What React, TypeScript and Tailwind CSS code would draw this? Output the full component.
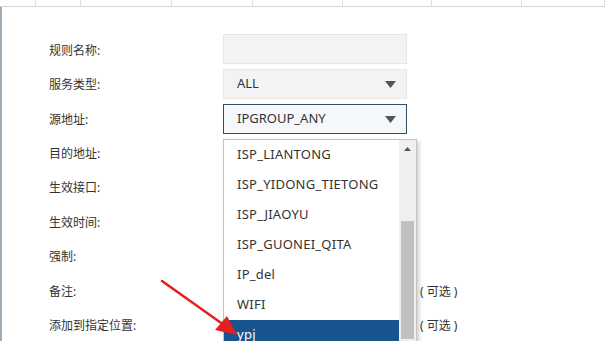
import React from "react";

const labels = ["规则名称:", "服务类型:", "源地址:", "目的地址:", "生效接口:", "生效时间:", "强制:", "备注:", "添加到指定位置:"];
const options = ["ISP_LIANTONG", "ISP_YIDONG_TIETONG", "ISP_JIAOYU", "ISP_GUONEI_QITA", "IP_del", "WIFI", "ypj"];
const cols = [36, 45, 91, 81, 90, 89, 90, 83];

const Tri = () => (
  <svg width="11" height="7" viewBox="0 0 11 7">
    <polygon points="0,0 11,0 5.5,7" fill="#555" />
  </svg>
);

export default function App() {
  return (
    <div
      className="relative w-[605px] h-[341px] overflow-hidden bg-white text-[#333]"
      style={{ fontFamily: '"Noto Sans", "Noto Sans CJK SC", sans-serif' }}
    >
      <div className="flex h-[7px] border-b border-[#d4d4d4]">
        {cols.map((w, i) => (
          <div key={i} className="h-full shrink-0 border-r border-[#e2e2e2]" style={{ width: w }} />
        ))}
      </div>
      <div className="flex h-[334px]">
        <div className="w-[2px] bg-[#9eadb8]" />
        <div className="flex">
          <div className="flex flex-col gap-[5px] pt-[29px] pl-[47px] w-[221px]">
            {labels.map((l) => (
              <div key={l} className="h-[30px] flex items-center text-[12px] text-[#333]">
                {l}
              </div>
            ))}
          </div>
          <div className="flex flex-col gap-[5px] pt-[27px] w-[184px]">
            <div className="h-[30px] bg-[#f3f3f3] border border-[#e6e6e6]" />
            <div className="h-[30px] bg-[#f3f3f3] border border-[#e6e6e6] flex items-center justify-between pl-[13px] pr-[10px] text-[13px]">
              <span>ALL</span>
              <Tri />
            </div>
            <div className="h-[30px] bg-[#f4f8fb] border border-[#2f4f63] flex items-center justify-between pl-[13px] pr-[10px] text-[13px]">
              <span>IPGROUP_ANY</span>
              <Tri />
            </div>
          </div>
          <div className="flex flex-col gap-[5px] pt-[29px] pl-[13px]">
            {labels.map((l, i) => (
              <div key={l} className="h-[30px] flex items-center text-[12px] text-[#333]">
                {i >= 7 ? "( 可选 )" : ""}
              </div>
            ))}
          </div>
        </div>
      </div>

      <div className="absolute left-[223px] top-[139px] w-[194px] h-[220px] bg-white border border-[#c4c4c4] shadow-[2px_2px_4px_rgba(0,0,0,0.2)] flex">
        <div className="flex-1 flex flex-col">
          {options.map((o) => (
            <div
              key={o}
              className={`h-[30px] shrink-0 flex items-center pl-[13px] text-[13px] tracking-[0.25px] ${o === "ypj" ? "bg-[#175490] text-white" : "text-[#333]"}`}
            >
              {o}
            </div>
          ))}
        </div>
        <div className="w-[17px] bg-[#f0f0f0] flex flex-col items-center">
          <div className="h-[17px] flex items-center justify-center">
            <svg width="7" height="4" viewBox="0 0 7 4">
              <polygon points="0,4 7,4 3.5,0" fill="#555" />
            </svg>
          </div>
          <div className="mt-[64px] w-[13px] h-[118px] bg-[#c1c1c1]" />
          <div className="h-[17px] flex items-center justify-center">
            <svg width="7" height="4" viewBox="0 0 7 4">
              <polygon points="0,0 7,0 3.5,4" fill="#888" />
            </svg>
          </div>
        </div>
      </div>

      <svg className="absolute left-0 top-0" width="605" height="341" viewBox="0 0 605 341">
        <line x1="162" y1="281" x2="224" y2="325" stroke="#e3201f" strokeWidth="2.5" strokeLinecap="round" />
        <polygon points="237,335 215,330 227,316" fill="#e3201f" />
      </svg>
    </div>
  );
}
